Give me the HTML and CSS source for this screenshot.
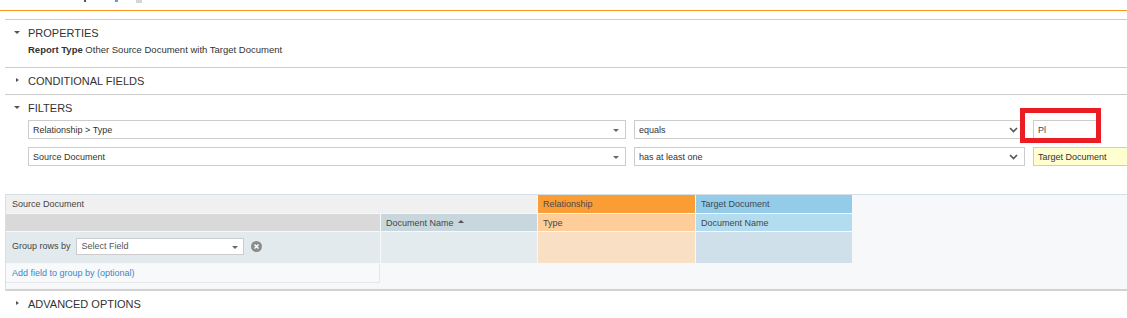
FILE: index.html
```html
<!DOCTYPE html>
<html lang="en">
<head>
<meta charset="utf-8">
<title>Report</title>
<link rel="stylesheet" href="styles.css">
</head>
<body>
<div class="topbar">
  <span class="mark mark-dark"></span>
  <span class="mark mark-blue"></span>
  <span class="mark mark-star"></span>
</div>

<section class="section section-first">
  <div class="sec-head"><span class="caret"><span class="tri-down"></span></span>PROPERTIES</div>
  <div class="prop-line"><b>Report Type</b> Other Source Document with Target Document</div>
</section>

<section class="section">
  <div class="sec-head sec-closed"><span class="caret"><span class="tri-right"></span></span>CONDITIONAL FIELDS</div>
</section>

<section class="section">
  <div class="sec-head"><span class="caret"><span class="tri-down"></span></span>FILTERS</div>
  <div class="filter-rows">
    <div class="filter-row">
      <div class="sel sel-field">Relationship &gt; Type<span class="sel-tri"></span></div>
      <div class="sel sel-op">equals<svg class="chev" width="9" height="6" viewBox="0 0 9 6"><path d="M1 1 L4.5 4.5 L8 1" fill="none" stroke="#555" stroke-width="1.6"/></svg></div>
      <div class="val-wrap">
        <div class="sel sel-val">Pl</div>
        <div class="highlight"></div>
      </div>
    </div>
    <div class="filter-row">
      <div class="sel sel-field">Source Document<span class="sel-tri"></span></div>
      <div class="sel sel-op">has at least one<svg class="chev" width="9" height="6" viewBox="0 0 9 6"><path d="M1 1 L4.5 4.5 L8 1" fill="none" stroke="#555" stroke-width="1.6"/></svg></div>
      <div class="sel sel-val sel-yellow">Target Document</div>
    </div>
  </div>
</section>

<div class="results">
  <div class="grid">
    <div class="cell h-source">Source Document</div>
    <div class="cell h-rel">Relationship</div>
    <div class="cell h-tgt">Target Document</div>

    <div class="cell c-gray"></div>
    <div class="cell c-docname">Document Name <span class="sort-up"></span></div>
    <div class="cell c-type">Type</div>
    <div class="cell c-tdoc">Document Name</div>

    <div class="cell c-group">
      <span>Group rows by</span>
      <div class="group-sel">Select Field<span class="sel-tri"></span></div>
      <span class="clear-btn"><svg width="11" height="11" viewBox="0 0 11 11"><circle cx="5.5" cy="5.5" r="5.5" fill="#8c8c8c"/><path d="M3.5 3.5 L7.5 7.5 M7.5 3.5 L3.5 7.5" stroke="#fff" stroke-width="1.5"/></svg></span>
    </div>
    <div class="cell d-doc"></div>
    <div class="cell d-rel"></div>
    <div class="cell d-tgt"></div>

    <div class="cell c-add"><a class="add-link">Add field to group by (optional)</a></div>
  </div>
</div>

<section class="section section-noborder">
  <div class="sec-head"><span class="caret"><span class="tri-right"></span></span>ADVANCED OPTIONS</div>
</section>
</body>
</html>
```

FILE: styles.css
```css
html, body {
  margin: 0;
  padding: 0;
  background: #ffffff;
  font-family: "Liberation Sans", Arial, sans-serif;
  color: #333333;
  width: 1127px;
  height: 318px;
  overflow: hidden;
}

.topbar {
  height: 10px;
  border-bottom: 1px solid #f7941d;
  display: flex;
  align-items: flex-start;
}
.mark { display: block; }
.mark-dark { width: 2px; height: 2px; background: #555; margin-left: 84px; }
.mark-blue { width: 3px; height: 2px; background: #5aa0d8; margin-left: 29px; }
.mark-star { width: 6px; height: 3px; background: #d6d6d6; margin-left: 18px; }

.section {
  margin-left: 5px;
  border-top: 1px solid #cccccc;
}
.section-first { margin-top: 8px; }
.section-noborder { border-top: none; }

.sec-head {
  display: flex;
  align-items: center;
  height: 14px;
  line-height: 14px;
  padding: 6px 0 0 9px;
  font-size: 11px;
  color: #333333;
}
.sec-closed { padding-bottom: 6px; }

.caret {
  width: 14px;
  display: flex;
  align-items: center;
}
.tri-down {
  width: 0;
  height: 0;
  border-left: 3px solid transparent;
  border-right: 3px solid transparent;
  border-top: 3px solid #555;
  margin-top: -2px;
}
.tri-right {
  width: 0;
  height: 0;
  border-top: 2.5px solid transparent;
  border-bottom: 2.5px solid transparent;
  border-left: 3px solid #555;
  margin-left: 2px;
  margin-top: -2px;
}

.prop-line {
  margin: 4px 0 0 23px;
  padding-bottom: 11px;
  height: 12px;
  line-height: 12px;
  font-size: 9.5px;
  color: #333;
}
.prop-line b { color: #333; }

.filter-rows {
  display: flex;
  flex-direction: column;
  gap: 8px;
  padding: 5px 0 28px 23px;
}
.filter-row {
  display: flex;
  gap: 8px;
  height: 19px;
}
.sel {
  box-sizing: border-box;
  height: 19px;
  border: 1px solid #cccccc;
  background: #ffffff;
  display: flex;
  align-items: center;
  padding: 0 4px;
  font-size: 9px;
  color: #333;
  position: relative;
  white-space: nowrap;
  flex: none;
}
.sel-field { width: 598px; }
.sel-op { width: 391px; justify-content: space-between; padding-right: 6px; }
.sel-val { width: 64px; color: #3d4a5a; }
.sel-yellow { width: 140px; background: #fefed0; color: #333; }

.sel-tri {
  position: absolute;
  right: 6px;
  top: 8px;
  width: 0;
  height: 0;
  border-left: 3px solid transparent;
  border-right: 3px solid transparent;
  border-top: 3px solid #666;
}

.val-wrap { position: relative; }
.highlight {
  position: absolute;
  left: -13px;
  top: -12px;
  width: 81px;
  height: 35px;
  box-sizing: border-box;
  border: 5px solid #ec1c24;
}

.results {
  margin-left: 5px;
  border-top: 1px solid #d4e0e6;
  border-left: 1px solid #d4e0e6;
  border-bottom: 2px solid #d2d2d2;
  background: #f6f8fa;
  padding-bottom: 6px;
}
.grid {
  display: grid;
  grid-template-columns: 374px 156px 157px 156px;
  grid-template-rows: 18px 17px 31px 19px;
  gap: 1px;
}
.cell {
  display: flex;
  align-items: center;
  padding: 0 5px;
  font-size: 9px;
  color: #454545;
  white-space: nowrap;
}
.h-source { grid-column: 1 / 3; background: #f0f0f0; padding-left: 6px; }
.h-rel { background: #fb9d35; color: #4a4a4a; }
.h-tgt { background: #93cbe9; color: #404a50; }
.c-gray { background: #d9d9d9; }
.c-docname { background: #c8d7de; }
.c-type { background: #fecd9a; }
.c-tdoc { background: #b3dcef; }
.sort-up {
  width: 0;
  height: 0;
  border-left: 3px solid transparent;
  border-right: 3px solid transparent;
  border-bottom: 3px solid #555;
  margin-left: 4px;
  margin-top: -2px;
}

.c-group { background: #e3eaee; padding-left: 6px; padding-bottom: 3px; color: #444; }
.group-sel {
  box-sizing: border-box;
  width: 168px;
  height: 17px;
  margin-left: 5px;
  border: 1px solid #cccccc;
  background: #fff;
  display: flex;
  align-items: center;
  padding: 0 5px;
  position: relative;
  color: #555;
}
.group-sel .sel-tri { right: 5px; top: 7px; }
.clear-btn { display: flex; margin-left: 7px; }

.d-doc { background: #e3ebee; }
.d-rel { background: #f9dfc4; }
.d-tgt { background: #cfe0eb; }

.c-add {
  background: #f7f9fa;
  border-right: 1px solid #e4e8ea;
  border-bottom: 1px solid #e4e8ea;
  padding-left: 6px;
  box-sizing: border-box;
}
.add-link { color: #3b87c9; text-decoration: none; }
```
